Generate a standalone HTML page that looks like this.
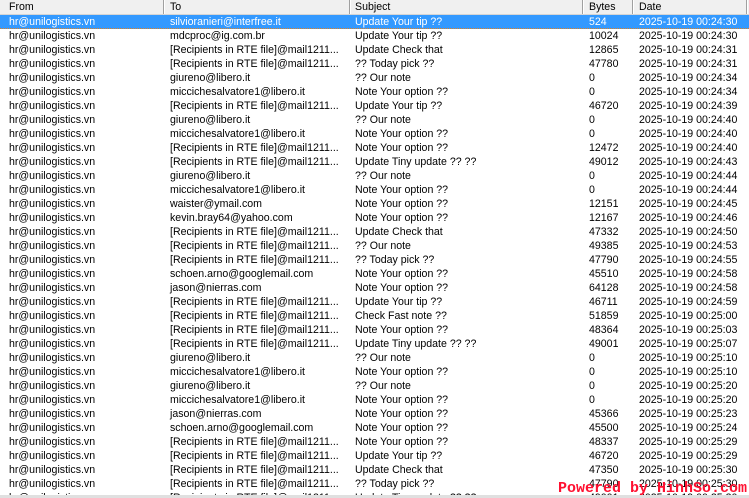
<!DOCTYPE html>
<html style="width:749px;height:498px;overflow:hidden"><head><meta charset="utf-8"><style>
body{margin:0;width:749px;height:498px;overflow:hidden;background:#fff;font-family:"Liberation Sans",sans-serif;font-size:10.6px;color:#000;position:relative}
.hdr{position:absolute;left:0;top:0;width:749px;height:14px;background:#f0f0f0;border-bottom:1px solid #d5d5d5}
.hdr span{position:absolute;top:0;line-height:14px}
.sep{position:absolute;top:0;width:1px;height:14px;background:#a0a0a0;border-right:1px solid #fff}
.row{position:absolute;left:0;width:749px;height:14px;line-height:14px;white-space:nowrap;overflow:hidden}
.row span{position:absolute;top:0}
.sel{background:#3399ff;color:#fff;border-bottom:1px dotted #e08020;height:13px}
.c1{left:9px}.c2{left:170px}.c3{left:355px}.c4{left:589px}.c5{left:639px}
.pw{position:absolute;left:558px;top:481px;color:#ff1030;font-family:"Liberation Mono",monospace;font-weight:bold;font-size:15px;white-space:nowrap;line-height:16px}
.bar{position:absolute;left:0;top:495px;width:749px;height:3px;background:#e0e0e0}
</style></head><body>
<div class="hdr"><span style="left:9px">From</span><span style="left:170px">To</span><span style="left:355px">Subject</span><span style="left:589px">Bytes</span><span style="left:639px">Date</span>
<div class="sep" style="left:163px"></div><div class="sep" style="left:349px"></div><div class="sep" style="left:582px"></div><div class="sep" style="left:632px"></div><div class="sep" style="left:746px"></div></div>
<div class="row sel" style="top:15px"><span class="c1">hr@unilogistics.vn</span><span class="c2">silvioranieri@interfree.it</span><span class="c3">Update Your tip ??</span><span class="c4">524</span><span class="c5">2025-10-19 00:24:30</span></div>
<div class="row" style="top:29px"><span class="c1">hr@unilogistics.vn</span><span class="c2">mdcproc@ig.com.br</span><span class="c3">Update Your tip ??</span><span class="c4">10024</span><span class="c5">2025-10-19 00:24:30</span></div>
<div class="row" style="top:43px"><span class="c1">hr@unilogistics.vn</span><span class="c2">[Recipients in RTE file]@mail1211...</span><span class="c3">Update Check that</span><span class="c4">12865</span><span class="c5">2025-10-19 00:24:31</span></div>
<div class="row" style="top:57px"><span class="c1">hr@unilogistics.vn</span><span class="c2">[Recipients in RTE file]@mail1211...</span><span class="c3">?? Today pick ??</span><span class="c4">47780</span><span class="c5">2025-10-19 00:24:31</span></div>
<div class="row" style="top:71px"><span class="c1">hr@unilogistics.vn</span><span class="c2">giureno@libero.it</span><span class="c3">?? Our note</span><span class="c4">0</span><span class="c5">2025-10-19 00:24:34</span></div>
<div class="row" style="top:85px"><span class="c1">hr@unilogistics.vn</span><span class="c2">miccichesalvatore1@libero.it</span><span class="c3">Note Your option ??</span><span class="c4">0</span><span class="c5">2025-10-19 00:24:34</span></div>
<div class="row" style="top:99px"><span class="c1">hr@unilogistics.vn</span><span class="c2">[Recipients in RTE file]@mail1211...</span><span class="c3">Update Your tip ??</span><span class="c4">46720</span><span class="c5">2025-10-19 00:24:39</span></div>
<div class="row" style="top:113px"><span class="c1">hr@unilogistics.vn</span><span class="c2">giureno@libero.it</span><span class="c3">?? Our note</span><span class="c4">0</span><span class="c5">2025-10-19 00:24:40</span></div>
<div class="row" style="top:127px"><span class="c1">hr@unilogistics.vn</span><span class="c2">miccichesalvatore1@libero.it</span><span class="c3">Note Your option ??</span><span class="c4">0</span><span class="c5">2025-10-19 00:24:40</span></div>
<div class="row" style="top:141px"><span class="c1">hr@unilogistics.vn</span><span class="c2">[Recipients in RTE file]@mail1211...</span><span class="c3">Note Your option ??</span><span class="c4">12472</span><span class="c5">2025-10-19 00:24:40</span></div>
<div class="row" style="top:155px"><span class="c1">hr@unilogistics.vn</span><span class="c2">[Recipients in RTE file]@mail1211...</span><span class="c3">Update Tiny update ?? ??</span><span class="c4">49012</span><span class="c5">2025-10-19 00:24:43</span></div>
<div class="row" style="top:169px"><span class="c1">hr@unilogistics.vn</span><span class="c2">giureno@libero.it</span><span class="c3">?? Our note</span><span class="c4">0</span><span class="c5">2025-10-19 00:24:44</span></div>
<div class="row" style="top:183px"><span class="c1">hr@unilogistics.vn</span><span class="c2">miccichesalvatore1@libero.it</span><span class="c3">Note Your option ??</span><span class="c4">0</span><span class="c5">2025-10-19 00:24:44</span></div>
<div class="row" style="top:197px"><span class="c1">hr@unilogistics.vn</span><span class="c2">waister@ymail.com</span><span class="c3">Note Your option ??</span><span class="c4">12151</span><span class="c5">2025-10-19 00:24:45</span></div>
<div class="row" style="top:211px"><span class="c1">hr@unilogistics.vn</span><span class="c2">kevin.bray64@yahoo.com</span><span class="c3">Note Your option ??</span><span class="c4">12167</span><span class="c5">2025-10-19 00:24:46</span></div>
<div class="row" style="top:225px"><span class="c1">hr@unilogistics.vn</span><span class="c2">[Recipients in RTE file]@mail1211...</span><span class="c3">Update Check that</span><span class="c4">47332</span><span class="c5">2025-10-19 00:24:50</span></div>
<div class="row" style="top:239px"><span class="c1">hr@unilogistics.vn</span><span class="c2">[Recipients in RTE file]@mail1211...</span><span class="c3">?? Our note</span><span class="c4">49385</span><span class="c5">2025-10-19 00:24:53</span></div>
<div class="row" style="top:253px"><span class="c1">hr@unilogistics.vn</span><span class="c2">[Recipients in RTE file]@mail1211...</span><span class="c3">?? Today pick ??</span><span class="c4">47790</span><span class="c5">2025-10-19 00:24:55</span></div>
<div class="row" style="top:267px"><span class="c1">hr@unilogistics.vn</span><span class="c2">schoen.arno@googlemail.com</span><span class="c3">Note Your option ??</span><span class="c4">45510</span><span class="c5">2025-10-19 00:24:58</span></div>
<div class="row" style="top:281px"><span class="c1">hr@unilogistics.vn</span><span class="c2">jason@nierras.com</span><span class="c3">Note Your option ??</span><span class="c4">64128</span><span class="c5">2025-10-19 00:24:58</span></div>
<div class="row" style="top:295px"><span class="c1">hr@unilogistics.vn</span><span class="c2">[Recipients in RTE file]@mail1211...</span><span class="c3">Update Your tip ??</span><span class="c4">46711</span><span class="c5">2025-10-19 00:24:59</span></div>
<div class="row" style="top:309px"><span class="c1">hr@unilogistics.vn</span><span class="c2">[Recipients in RTE file]@mail1211...</span><span class="c3">Check Fast note ??</span><span class="c4">51859</span><span class="c5">2025-10-19 00:25:00</span></div>
<div class="row" style="top:323px"><span class="c1">hr@unilogistics.vn</span><span class="c2">[Recipients in RTE file]@mail1211...</span><span class="c3">Note Your option ??</span><span class="c4">48364</span><span class="c5">2025-10-19 00:25:03</span></div>
<div class="row" style="top:337px"><span class="c1">hr@unilogistics.vn</span><span class="c2">[Recipients in RTE file]@mail1211...</span><span class="c3">Update Tiny update ?? ??</span><span class="c4">49001</span><span class="c5">2025-10-19 00:25:07</span></div>
<div class="row" style="top:351px"><span class="c1">hr@unilogistics.vn</span><span class="c2">giureno@libero.it</span><span class="c3">?? Our note</span><span class="c4">0</span><span class="c5">2025-10-19 00:25:10</span></div>
<div class="row" style="top:365px"><span class="c1">hr@unilogistics.vn</span><span class="c2">miccichesalvatore1@libero.it</span><span class="c3">Note Your option ??</span><span class="c4">0</span><span class="c5">2025-10-19 00:25:10</span></div>
<div class="row" style="top:379px"><span class="c1">hr@unilogistics.vn</span><span class="c2">giureno@libero.it</span><span class="c3">?? Our note</span><span class="c4">0</span><span class="c5">2025-10-19 00:25:20</span></div>
<div class="row" style="top:393px"><span class="c1">hr@unilogistics.vn</span><span class="c2">miccichesalvatore1@libero.it</span><span class="c3">Note Your option ??</span><span class="c4">0</span><span class="c5">2025-10-19 00:25:20</span></div>
<div class="row" style="top:407px"><span class="c1">hr@unilogistics.vn</span><span class="c2">jason@nierras.com</span><span class="c3">Note Your option ??</span><span class="c4">45366</span><span class="c5">2025-10-19 00:25:23</span></div>
<div class="row" style="top:421px"><span class="c1">hr@unilogistics.vn</span><span class="c2">schoen.arno@googlemail.com</span><span class="c3">Note Your option ??</span><span class="c4">45500</span><span class="c5">2025-10-19 00:25:24</span></div>
<div class="row" style="top:435px"><span class="c1">hr@unilogistics.vn</span><span class="c2">[Recipients in RTE file]@mail1211...</span><span class="c3">Note Your option ??</span><span class="c4">48337</span><span class="c5">2025-10-19 00:25:29</span></div>
<div class="row" style="top:449px"><span class="c1">hr@unilogistics.vn</span><span class="c2">[Recipients in RTE file]@mail1211...</span><span class="c3">Update Your tip ??</span><span class="c4">46720</span><span class="c5">2025-10-19 00:25:29</span></div>
<div class="row" style="top:463px"><span class="c1">hr@unilogistics.vn</span><span class="c2">[Recipients in RTE file]@mail1211...</span><span class="c3">Update Check that</span><span class="c4">47350</span><span class="c5">2025-10-19 00:25:30</span></div>
<div class="row" style="top:477px"><span class="c1">hr@unilogistics.vn</span><span class="c2">[Recipients in RTE file]@mail1211...</span><span class="c3">?? Today pick ??</span><span class="c4">47790</span><span class="c5">2025-10-19 00:25:30</span></div>
<div class="row" style="top:491px;height:4px"><span class="c1">hr@unilogistics.vn</span><span class="c2">[Recipients in RTE file]@mail1211...</span><span class="c3">Update Tiny update ?? ??</span><span class="c4">49001</span><span class="c5">2025-10-19 00:25:30</span></div>
<div class="bar"></div>
<div class="pw">Powered by HinhSo.com</div>
</body></html>
